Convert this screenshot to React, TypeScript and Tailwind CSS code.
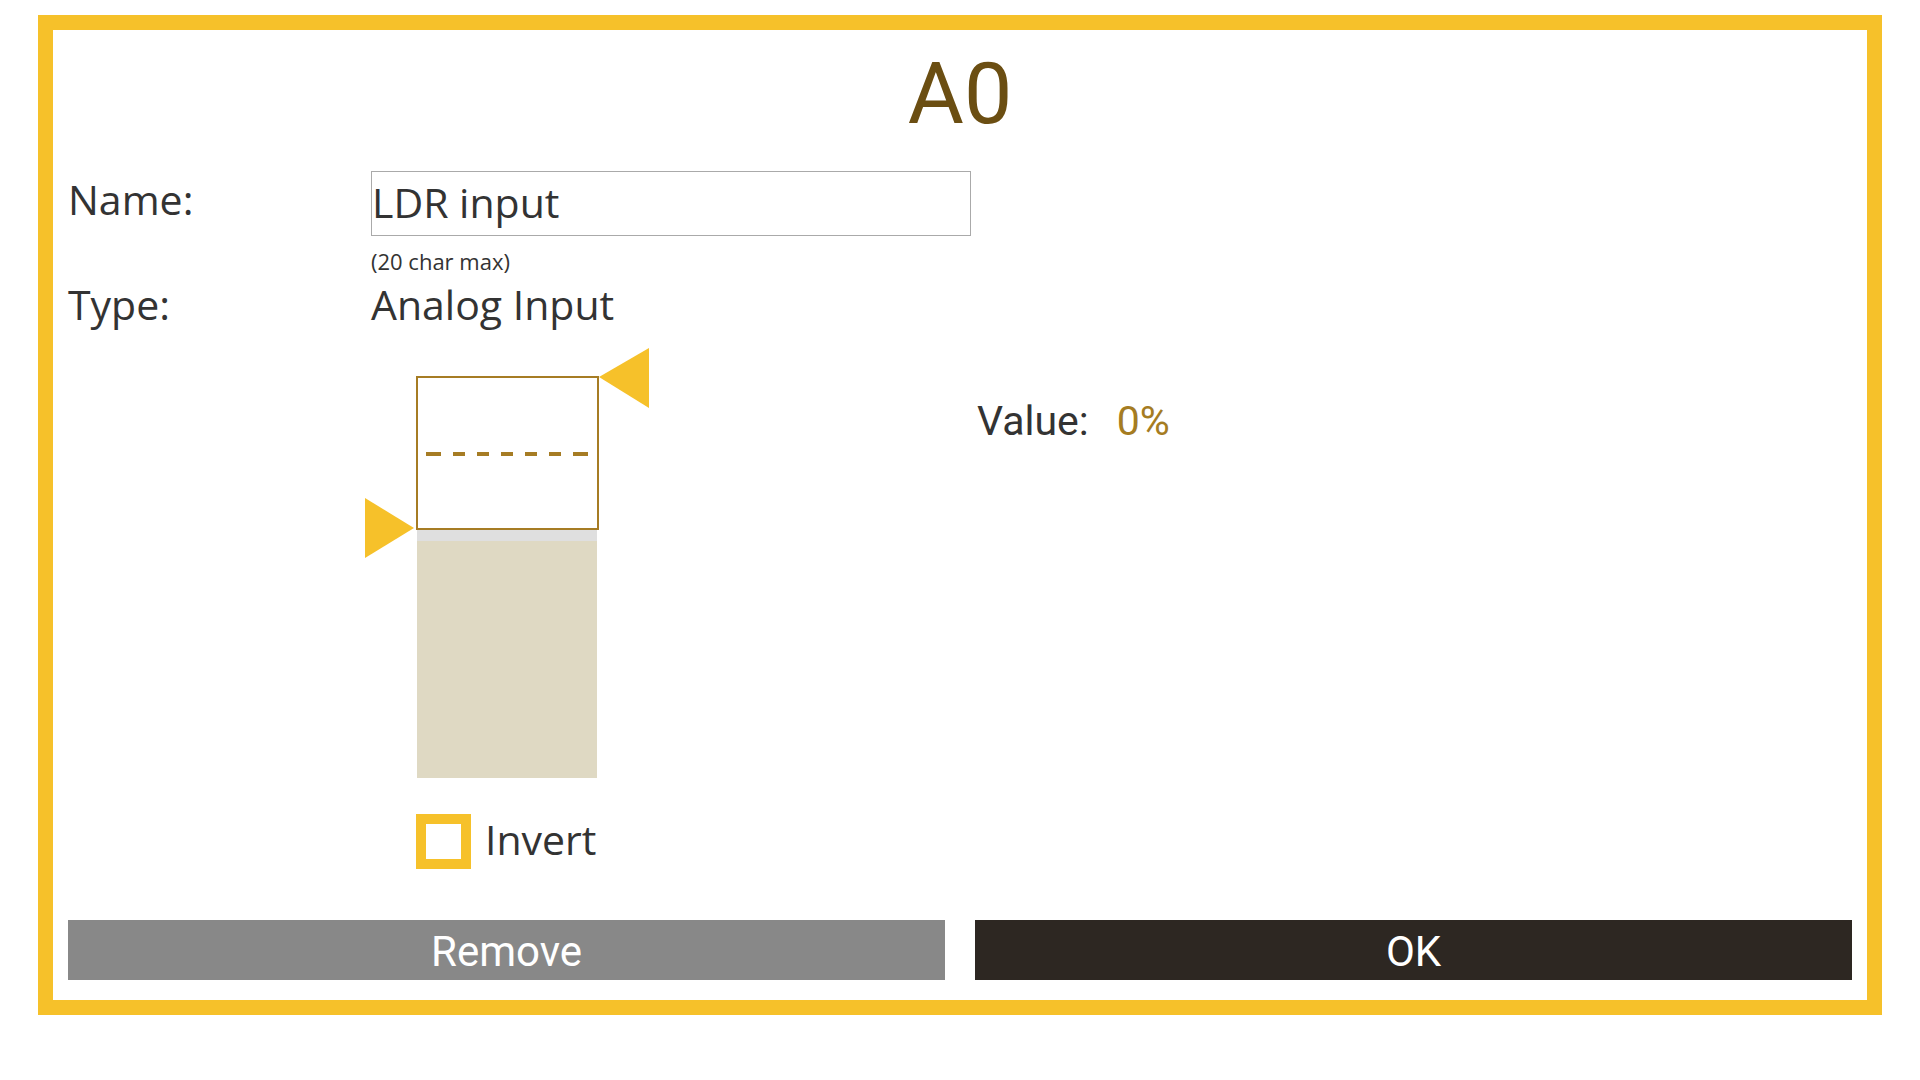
const SANS = "font-['Open_Sans',sans-serif]";
const TECH = "font-['Roboto',sans-serif]";

function LevelBar() {
  // dashes of the threshold line, x offsets inside the box
  const dashes = [
    [8, 15],
    [35, 12],
    [59, 12],
    [83, 12],
    [107, 12],
    [131, 12],
    [155, 15],
  ];

  return (
    <div className="relative w-[183px]">
      {/* upper handle */}
      <svg className="absolute left-[183px] -top-[28px]" width="50" height="60" viewBox="0 0 50 60">
        <polygon points="0,29 50,0 50,60" fill="#f6c12a" />
      </svg>
      {/* lower handle */}
      <svg className="absolute -left-[51px] top-[122px]" width="49" height="60" viewBox="0 0 49 60">
        <polygon points="0,0 49,30 0,60" fill="#f6c12a" />
      </svg>

      <div className="relative h-[154px] border-2 border-[#a67c24] bg-white">
        <svg className="absolute left-0 top-[74px]" width="179" height="4" viewBox="0 0 179 4">
          {dashes.map(([x, w]) => (
            <rect key={x} x={x} y="0" width={w} height="4" fill="#a67c24" />
          ))}
        </svg>
      </div>
      <div className="ml-[1px] h-[11px] w-[180px] bg-[#dfdfdf]" />
      <div className="ml-[1px] h-[237px] w-[180px] bg-[#dfd9c3]" />
    </div>
  );
}

export default function App() {
  return (
    <div className="min-h-[1080px] bg-white pl-[38px] pt-[15px]">
      <div className="flex h-[1000px] w-[1844px] flex-col border-[15px] border-[#f6c12a] bg-white px-[15px]">
        <h1 className={`${TECH} mt-[14px] text-center text-[86px] leading-[100px] text-[#6b4e12]`}>A0</h1>

        <div className={`${SANS} mt-[27px] flex items-start text-[41px] text-[#333333]`}>
          <div className="w-[303px] leading-[56px]">Name:</div>
          <input
            readOnly
            value="LDR input"
            className="h-[65px] w-[600px] border border-[#aaaaaa] bg-white px-0 pb-[4px] text-[41px] text-[#333333] outline-none"
          />
        </div>

        <div className={`${SANS} mt-[10px] flex text-[22px] leading-[30px] text-[#333333]`}>
          <div className="w-[303px]" />
          <div>(20 char max)</div>
        </div>

        <div className={`${SANS} flex text-[41px] leading-[56px] text-[#333333]`}>
          <div className="w-[303px]">Type:</div>
          <div>Analog Input</div>
        </div>

        <div className="flex">
          <div className="w-[303px]" />
          <div className="w-[606px] pl-[45px] pt-[44px]">
            <LevelBar />
            <div className="mt-[35px] flex items-center">
              <div className="h-[55px] w-[55px] border-[10px] border-[#f6c12a] bg-white" />
              <span className={`${SANS} mb-[4px] ml-[14px] text-[41px] leading-[52px] text-[#333333]`}>Invert</span>
            </div>
          </div>
          <div className={`${TECH} mt-[61px] flex gap-[28px] text-[41px] leading-[56px]`}>
            <span className="text-[#333333]">Value:</span>
            <span className="text-[#a57c22]">0%</span>
          </div>
        </div>

        <div className={`${TECH} mt-[51px] flex gap-[30px] text-[42px] text-white`}>
          <button className="h-[60px] flex-1 bg-[#888888]">Remove</button>
          <button className="h-[60px] flex-1 bg-[#2d2722]">OK</button>
        </div>
      </div>
    </div>
  );
}
